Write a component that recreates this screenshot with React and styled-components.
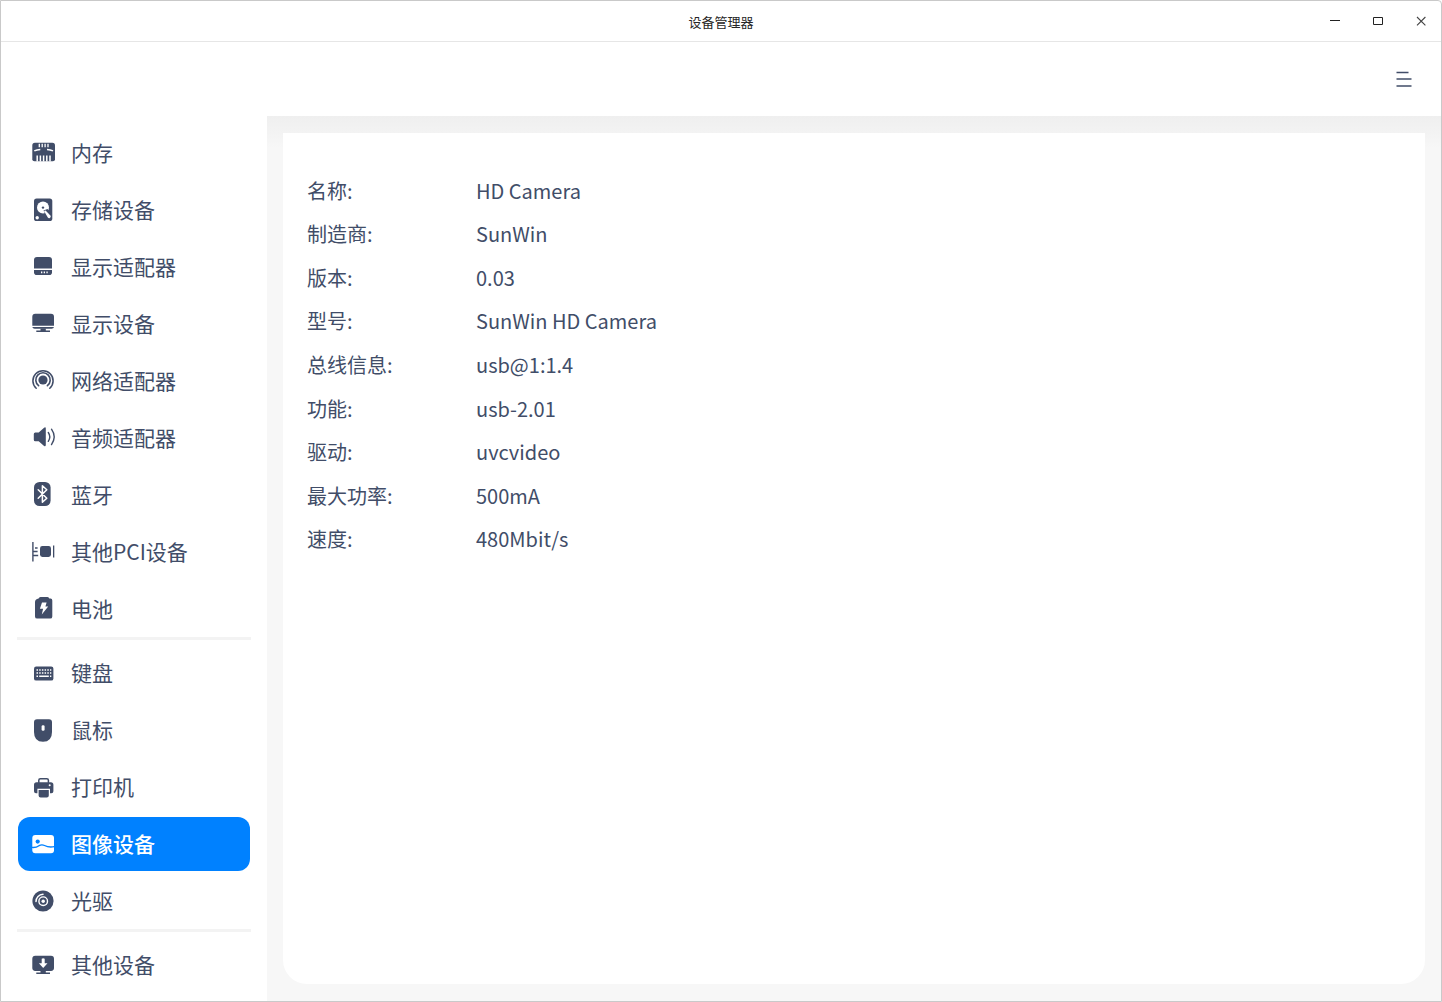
import React, { useState } from "react";
import styled, { createGlobalStyle } from "styled-components";

const INK = "#414d68";
const ACCENT = "#0081ff";

const GlobalStyle = createGlobalStyle`
  *, *::before, *::after { box-sizing: border-box; }
  html, body, #root { height: 100%; }
  body {
    margin: 0;
    background: #fff;
    font-family: "Noto Sans CJK SC", sans-serif;
    color: ${INK};
  }
  button { font: inherit; color: inherit; border: 0; background: none; padding: 0; margin: 0; cursor: pointer; }
`;

const Window = styled.div`
  display: flex;
  flex-direction: column;
  min-height: 100%;
  border: 1px solid #c9c9c9;
  border-top-right-radius: 4px;
  background: #fff;
`;

const TitleBar = styled.header`
  display: grid;
  grid-template-columns: 1fr auto 1fr;
  align-items: center;
  height: 41px;
  border-bottom: 1px solid #e6e6e6;
`;

const Title = styled.h1`
  grid-column: 2;
  margin: 0;
  padding-top: 2px;
  font-size: 13px;
  font-weight: 400;
  line-height: 20px;
  color: #262626;
`;

const WindowControls = styled.div`
  display: flex;
  justify-content: flex-end;
  gap: 19px;
  padding-right: 8px;
`;

const IconButton = styled.button`
  display: flex;
  align-items: center;
  justify-content: center;
  width: ${(p) => p.$size}px;
  height: ${(p) => p.$size}px;
  color: ${(p) => p.$color};
`;

const Toolbar = styled.div`
  display: flex;
  align-items: center;
  justify-content: flex-end;
  height: 74px;
  padding-right: 21px;
`;

const Body = styled.div`
  display: flex;
  flex: 1;
`;

const Sidebar = styled.nav`
  flex: 0 0 266px;
  padding: 10px 16px 8px;
`;

const Group = styled.ul`
  display: flex;
  flex-direction: column;
  gap: 3px;
  list-style: none;
  margin: 0;
  padding: 0 1px;
`;

const Divider = styled.hr`
  height: 3px;
  margin: 1px 0 6px;
  border: 0;
  background: #f3f3f3;
`;

const NavItem = styled.button`
  display: flex;
  align-items: center;
  gap: 16px;
  width: 100%;
  height: 54px;
  padding: 0 13px;
  border-radius: 12px;
  text-align: left;
  font-size: 21px;
  line-height: 32px;
  white-space: nowrap;
  color: ${(p) => (p.$active ? "#fff" : INK)};
  background: ${(p) => (p.$active ? ACCENT : "transparent")};
  font-weight: ${(p) => (p.$active ? 500 : 400)};
  --cut: ${(p) => (p.$active ? ACCENT : "#fff")};
`;

const NavLabel = styled.span`
  padding-bottom: 2px;
`;

const Glyph = styled.svg`
  flex: none;
  width: 24px;
  height: 24px;
  overflow: visible;
  fill: currentColor;
`;

const Main = styled.main`
  display: flex;
  flex: 1;
  min-width: 0;
  padding: 17px 16px;
  background: linear-gradient(#efefef, #f3f3f3 17px, #f7f7f7 32px);
`;

const Card = styled.section`
  flex: 1;
  padding: 36px 24px 24px;
  border-radius: 0 0 24px 24px;
  background: #fff;
`;

const Details = styled.table`
  width: 100%;
  height: 392px;
  border-collapse: collapse;
  font-size: 20px;
  line-height: 30px;
`;

const Label = styled.th`
  width: 169px;
  padding: 0;
  text-align: left;
  font-weight: 400;
  white-space: nowrap;
`;

const Value = styled.td`
  padding: 0;
`;

const stroke = (width, color = "currentColor", cap = "round") => ({
  fill: "none",
  stroke: color,
  strokeWidth: width,
  strokeLinecap: cap,
  strokeLinejoin: "round",
});

const CUT = "var(--cut)";

const icons = {
  memory: (
    <>
      <path d="M3.9 1.8h17.5q2.6 0 2.6 2.8v13.6q0 2.1-2.1 2.1H3.4q-2.1 0-2.1-2.1V4.6q0-2.8 2.6-2.8z" />
      <path d="M8.300 2.800v3.400M11.200 2.800v3.400M14.100 2.800v3.400M17 2.800v3.400" {...stroke(1.3, CUT, "butt")} />
      <path d="M3.300 9.900q2.500-1.300 6-1.500M22 9.900q-2.500-1.300-6-1.500" {...stroke(1.5, CUT, "butt")} />
      <path d="M6.200 14.600v5.800M9.400 14.600v5.800M12.600 14.600v5.800M15.800 14.600v5.800M19 14.600v5.800" {...stroke(1.5, CUT, "butt")} />
    </>
  ),
  storage: (
    <>
      <rect x="3" y="0.5" width="18.300" height="22.500" rx="2.600" />
      <circle cx="12" cy="9.400" r="6" fill={CUT} />
      <path d="M12.500 12.500l4-1.500 4 4.500-4.500 4z" />
      <path d="M13 13l1.600-.6 5 5.400q.6 1.400-.8 2.200-1.200.5-2-.4z" fill={CUT} />
      <circle cx="12" cy="9.600" r="1.200" />
      <circle cx="6.200" cy="19.800" r="1.700" fill={CUT} />
    </>
  ),
  adapter: (
    <>
      <path d="M6 2h12q3 0 3 3v8.600H3V5q0-3 3-3z" />
      <path d="M3 15h18v2.200q0 2.800-2.800 2.800H5.800Q3 20 3 17.200z" />
      <path fill={CUT} d="M10 16.500h1.300v1.800H10zM12.700 16.500h1.300v1.800h-1.300zM15.400 16.500h1.300v1.800h-1.300z" />
    </>
  ),
  monitor: (
    <>
      <path d="M4.300 1.700H20q3 0 3 3v9H1.300v-9q0-3 3-3zM1.300 15H23q-.4 1.800-2.400 1.800H3.700Q1.700 16.800 1.300 15z" />
      <path d="M9.500 16.500h5.300v2h4.200V20H5.300v-1.500h4.200z" />
    </>
  ),
  network: (
    <>
      <circle cx="12" cy="11" r="4.600" />
      <path d="M7.600 16.700a7.200 7.200 0 1 1 8.800 0" {...stroke(1.6)} />
      <path d="M5.200 19.300a10.100 10.100 0 1 1 13.600 0" {...stroke(1.5)} />
    </>
  ),
  audio: (
    <>
      <path d="M4.300 6.500h3.400l5.400-4.800q1.700-1 1.700.8v16.600q0 1.800-1.700.8l-5.400-4.700H4.300q-1.500 0-1.500-1.500V8q0-1.500 1.500-1.500z" />
      <path d="M17.300 6.500q3 4.300 0 8.800M20.500 3.200q5.400 7.700 0 15.400" {...stroke(1.4)} />
    </>
  ),
  bluetooth: (
    <>
      <rect x="3" y="-1" width="16.600" height="24" rx="5.500" />
      <path d="M7.200 6.700l8.600 8.600-4.400 4V2.700l4.400 4-8.600 8.600" {...stroke(1.5, CUT)} />
    </>
  ),
  pci: (
    <>
      <rect x="9" y="6" width="11" height="11" rx="2.400" />
      <path d="M1.200 2h1.400v19.500H1.200zM22 5.500h1.300v12H22zM4 7.200h2.600v1.500H4zM2.600 10.800h4v1.500h-4zM2.600 14.800h4.600v1.500H2.600z" />
    </>
  ),
  battery: (
    <>
      <path d="M9.500 0h7q1.500 0 1.800 1.600h1.300q1.700.2 1.700 2v15.800q0 2.200-2.200 2.200H6.200Q4 21.600 4 19.400V5q0-2.700 3.600-3.400Q8 0 9.500 0z" />
      <path fill={CUT} d="M11 5.500h4.600l-1.200 4h2.800l-6.400 8 1.300-5.700H8.900z" />
    </>
  ),
  keyboard: (
    <>
      <rect x="3" y="5.600" width="19.400" height="14" rx="2.200" />
      <path
        fill={CUT}
        d="M5.500 8.200h1.500v1.500H5.500zM8.200 8.200h1.500v1.500H8.200zM10.900 8.200h1.500v1.500h-1.500zM13.600 8.200h1.500v1.500h-1.500zM16.300 8.200h1.500v1.500h-1.500zM19 8.200h1.300v1.500H19zM5.500 11.300h1.500v1.500H5.500zM8.200 11.300h1.500v1.500H8.200zM10.900 11.300h1.500v1.500h-1.500zM13.600 11.300h1.500v1.500h-1.500zM16.300 11.300h1.500v1.500h-1.500zM19 11.300h1.300v1.500H19zM5.500 14.500h1.500V16H5.500zM8.200 14.500h9.600V16H8.200zM19 14.500h1.300V16H19z"
      />
    </>
  ),
  mouse: (
    <>
      <path d="M6 1.300h12q3 0 3 3V14q0 9.800-9 9.800T3 14V4.300q0-3 3-3z" />
      <rect x="10.600" y="7.200" width="3" height="5.600" rx="1.300" fill={CUT} />
    </>
  ),
  printer: (
    <>
      <path d="M7.800 7.500V5.300q0-1.600 1.600-1.600h6.400q1.600 0 1.600 1.600v2.200" {...stroke(1.5)} />
      <path d="M5.500 7.300h14.400q2.500 0 2.500 2.500v6.400q0 2-2 2H19v-4.500H6.400v4.500H5q-2 0-2-2V9.800q0-2.500 2.500-2.500z" />
      <circle cx="18.700" cy="10.200" r="1" fill={CUT} />
      <path d="M7.600 15h10.200v5.500q0 2-2 2H9.600q-2 0-2-2z" />
    </>
  ),
  image: (
    <>
      <rect x="1.300" y="3" width="21.700" height="18.300" rx="3" />
      <path d="M1 15.400q4 .4 7-1.700 2.800-1.600 5.500-.2 4.500 2.300 9.800 1.100" {...stroke(1.400, CUT, "butt")} />
      <circle cx="6.700" cy="9.600" r="2.100" fill={CUT} />
    </>
  ),
  disc: (
    <>
      <circle cx="12" cy="12" r="10.600" />
      <circle cx="12.200" cy="12.200" r="4.300" {...stroke(1.4, CUT)} />
      <circle cx="12.200" cy="12.200" r="1.700" fill={CUT} />
      <path d="M5 12.500A7.300 7.300 0 0 1 12 5.200" {...stroke(1.5, CUT)} />
    </>
  ),
  other: (
    <>
      <path d="M4.300 2.700H20q3 0 3 3v9.400q0 2.800-3 2.800H4.300q-3 0-3-2.800V5.700q0-3 3-3z" />
      <path d="M9.500 17.500h5.300v2H19V21H5.300v-1.500h4.200z" />
      <path fill={CUT} d="M10.700 5.800q1.500-1 3 0v4.500h2.800l-4.300 4.700-4.300-4.700h2.800z" />
    </>
  ),
};

const groups = [
  [
    ["memory", "内存"],
    ["storage", "存储设备"],
    ["adapter", "显示适配器"],
    ["monitor", "显示设备"],
    ["network", "网络适配器"],
    ["audio", "音频适配器"],
    ["bluetooth", "蓝牙"],
    ["pci", "其他PCI设备"],
    ["battery", "电池"],
  ],
  [
    ["keyboard", "键盘"],
    ["mouse", "鼠标"],
    ["printer", "打印机"],
    ["image", "图像设备"],
    ["disc", "光驱"],
  ],
  [["other", "其他设备"]],
];

const details = [
  ["名称:", "HD Camera"],
  ["制造商:", "SunWin"],
  ["版本:", "0.03"],
  ["型号:", "SunWin HD Camera"],
  ["总线信息:", "usb@1:1.4"],
  ["功能:", "usb-2.01"],
  ["驱动:", "uvcvideo"],
  ["最大功率:", "500mA"],
  ["速度:", "480Mbit/s"],
];

export default function App() {
  const [active, setActive] = useState("image");

  return (
    <>
      <GlobalStyle />
      <Window>
        <TitleBar>
          <Title>设备管理器</Title>
          <WindowControls>
            <IconButton type="button" aria-label="最小化" $size={24} $color="#222">
              <svg width="12" height="12" viewBox="0 0 12 12">
                <path d="M1 5.5h10" stroke="currentColor" />
              </svg>
            </IconButton>
            <IconButton type="button" aria-label="最大化" $size={24} $color="#222">
              <svg width="12" height="12" viewBox="0 0 12 12">
                <path d="M1.5 2.5h9v7h-9z" stroke="currentColor" fill="none" />
              </svg>
            </IconButton>
            <IconButton type="button" aria-label="关闭" $size={24} $color="#444">
              <svg width="12" height="12" viewBox="0 0 12 12">
                <path d="M2 2l8.400 8.400M10.400 2L2 10.400" stroke="currentColor" strokeWidth="1.1" />
              </svg>
            </IconButton>
          </WindowControls>
        </TitleBar>
        <Toolbar>
          <IconButton type="button" aria-label="菜单" $size={32} $color={INK}>
            <svg width="16" height="16" viewBox="0 0 16 16">
              <path d="M0.5 1.500h12M0.5 8h15M0.5 15h15" stroke="currentColor" strokeWidth="1.4" />
            </svg>
          </IconButton>
        </Toolbar>
        <Body>
          <Sidebar aria-label="设备">
            {groups.map((items, index) => (
              <React.Fragment key={index}>
                {index > 0 && <Divider />}
                <Group>
                  {items.map(([id, label]) => (
                    <li key={id}>
                      <NavItem
                        type="button"
                        $active={id === active}
                        aria-current={id === active ? "page" : undefined}
                        onClick={() => setActive(id)}
                      >
                        <Glyph viewBox="0 0 24 24" aria-hidden="true">
                          {icons[id]}
                        </Glyph>
                        <NavLabel>{label}</NavLabel>
                      </NavItem>
                    </li>
                  ))}
                </Group>
              </React.Fragment>
            ))}
          </Sidebar>
          <Main>
            <Card>
              <Details>
                <tbody>
                  {details.map(([label, value]) => (
                    <tr key={label}>
                      <Label scope="row">{label}</Label>
                      <Value>{value}</Value>
                    </tr>
                  ))}
                </tbody>
              </Details>
            </Card>
          </Main>
        </Body>
      </Window>
    </>
  );
}
